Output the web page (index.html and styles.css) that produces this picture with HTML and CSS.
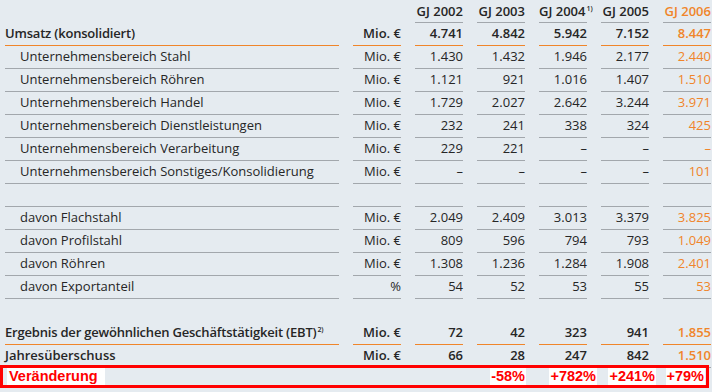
FILE: index.html
```html
<!DOCTYPE html>
<html lang="de">
<head>
<meta charset="utf-8">
<title>Umsatz</title>
<link rel="stylesheet" href="styles.css">
</head>
<body>
<div class="table">
  <div class="row head">
    <div class="c lbl"></div><div class="c unit"></div>
    <div class="c num">GJ 2002</div><div class="c num">GJ 2003</div><div class="c num">GJ 2004<sup>1)</sup></div><div class="c num">GJ 2005</div><div class="c num hl">GJ 2006</div>
  </div>
  <div class="row main">
    <div class="c lbl">Umsatz (konsolidiert)</div><div class="c unit">Mio. €</div>
    <div class="c num">4.741</div><div class="c num">4.842</div><div class="c num">5.942</div><div class="c num">7.152</div><div class="c num hl">8.447</div>
  </div>
  <div class="row sub">
    <div class="c lbl">Unternehmensbereich Stahl</div><div class="c unit">Mio. €</div>
    <div class="c num">1.430</div><div class="c num">1.432</div><div class="c num">1.946</div><div class="c num">2.177</div><div class="c num hl">2.440</div>
  </div>
  <div class="row sub">
    <div class="c lbl">Unternehmensbereich Röhren</div><div class="c unit">Mio. €</div>
    <div class="c num">1.121</div><div class="c num">921</div><div class="c num">1.016</div><div class="c num">1.407</div><div class="c num hl">1.510</div>
  </div>
  <div class="row sub">
    <div class="c lbl">Unternehmensbereich Handel</div><div class="c unit">Mio. €</div>
    <div class="c num">1.729</div><div class="c num">2.027</div><div class="c num">2.642</div><div class="c num">3.244</div><div class="c num hl">3.971</div>
  </div>
  <div class="row sub">
    <div class="c lbl">Unternehmensbereich Dienstleistungen</div><div class="c unit">Mio. €</div>
    <div class="c num">232</div><div class="c num">241</div><div class="c num">338</div><div class="c num">324</div><div class="c num hl">425</div>
  </div>
  <div class="row sub">
    <div class="c lbl">Unternehmensbereich Verarbeitung</div><div class="c unit">Mio. €</div>
    <div class="c num">229</div><div class="c num">221</div><div class="c num">–</div><div class="c num">–</div><div class="c num hl">–</div>
  </div>
  <div class="row sub">
    <div class="c lbl">Unternehmensbereich Sonstiges/Konsolidierung</div><div class="c unit">Mio. €</div>
    <div class="c num">–</div><div class="c num">–</div><div class="c num">–</div><div class="c num">–</div><div class="c num hl">101</div>
  </div>
  <div class="row sub">
    <div class="c lbl"></div><div class="c unit"></div>
    <div class="c num"></div><div class="c num"></div><div class="c num"></div><div class="c num"></div><div class="c num"></div>
  </div>
  <div class="row sub">
    <div class="c lbl">davon Flachstahl</div><div class="c unit">Mio. €</div>
    <div class="c num">2.049</div><div class="c num">2.409</div><div class="c num">3.013</div><div class="c num">3.379</div><div class="c num hl">3.825</div>
  </div>
  <div class="row sub">
    <div class="c lbl">davon Profilstahl</div><div class="c unit">Mio. €</div>
    <div class="c num">809</div><div class="c num">596</div><div class="c num">794</div><div class="c num">793</div><div class="c num hl">1.049</div>
  </div>
  <div class="row sub">
    <div class="c lbl">davon Röhren</div><div class="c unit">Mio. €</div>
    <div class="c num">1.308</div><div class="c num">1.236</div><div class="c num">1.284</div><div class="c num">1.908</div><div class="c num hl">2.401</div>
  </div>
  <div class="row sub">
    <div class="c lbl">davon Exportanteil</div><div class="c unit">%</div>
    <div class="c num">54</div><div class="c num">52</div><div class="c num">53</div><div class="c num">55</div><div class="c num hl">53</div>
  </div>
  <div class="row gap">
    <div class="c lbl"></div><div class="c unit"></div>
    <div class="c num"></div><div class="c num"></div><div class="c num"></div><div class="c num"></div><div class="c num"></div>
  </div>
  <div class="row main">
    <div class="c lbl">Ergebnis der gewöhnlichen Geschäftstätigkeit (EBT)<sup>2)</sup></div><div class="c unit">Mio. €</div>
    <div class="c num">72</div><div class="c num">42</div><div class="c num">323</div><div class="c num">941</div><div class="c num hl">1.855</div>
  </div>
  <div class="row strong">
    <div class="c lbl">Jahresüberschuss</div><div class="c unit">Mio. €</div>
    <div class="c num">66</div><div class="c num">28</div><div class="c num">247</div><div class="c num">842</div><div class="c num hl">1.510</div>
  </div>
  <div class="change">
    <span class="tag tag-label">Veränderung</span>
    <span></span>
    <span></span>
    <span class="tag tag-58">-58%</span>
    <span class="tag tag-782">+782%</span>
    <span class="tag tag-241">+241%</span>
    <span class="tag tag-79">+79%</span>
  </div>
</div>
</body>
</html>
```

FILE: styles.css
```css
html, body {
  margin: 0;
  padding: 0;
}
body {
  background: #e5ebf0;
  color: #262626;
  font-family: "Open Sans", "Liberation Sans", sans-serif;
  font-size: 13px;
}
.table {
  width: 712px;
}
.row {
  display: grid;
  grid-template-columns: 334px repeat(6, 48px);
  column-gap: 14px;
  padding-left: 5px;
}
.c {
  height: 20px;
  line-height: 20px;
  padding-bottom: 2px;
  border-bottom: 1px solid #a2a7ac;
  white-space: nowrap;
}
.num, .unit {
  text-align: right;
}
.sub .lbl {
  padding-left: 15px;
}
.hl {
  color: #f0852a;
}
.head .c {
  font-weight: 600;
  line-height: 22px;
}
.head .lbl, .head .unit {
  border-bottom-color: transparent;
}
.main .c {
  border-bottom-color: #f0852a;
}
.main .c, .strong .c {
  font-weight: 600;
}
.main .lbl {
  letter-spacing: -0.2px;
}
.gap .c {
  border-bottom-color: transparent;
}
sup {
  font-size: 7px;
  line-height: 0;
  vertical-align: 5px;
  margin-left: 1px;
}
.change {
  position: relative;
  margin-top: -3px;
  width: 701px;
  height: 17px;
  padding-left: 2px;
  border: 3px solid #ff0000;
  display: grid;
  grid-template-columns: 334px repeat(6, 48px);
  column-gap: 14px;
  font-family: "Liberation Sans", Arial, sans-serif;
  font-weight: bold;
  font-size: 14.5px;
  line-height: 17px;
  color: #ff0000;
  white-space: nowrap;
}
.tag {
  background: #ffffff;
  display: block;
  padding: 0 1px;
  justify-self: end;
}
.tag-label {
  justify-self: start;
  margin-left: 2px;
  padding: 0 7px 0 2px;
}
.tag-58 {
  margin-right: -1px;
}
.tag-782 {
  margin-right: -10px;
}
.tag-241 {
  margin-right: -7px;
}
.tag-79 {
  margin-right: 6px;
}
```
